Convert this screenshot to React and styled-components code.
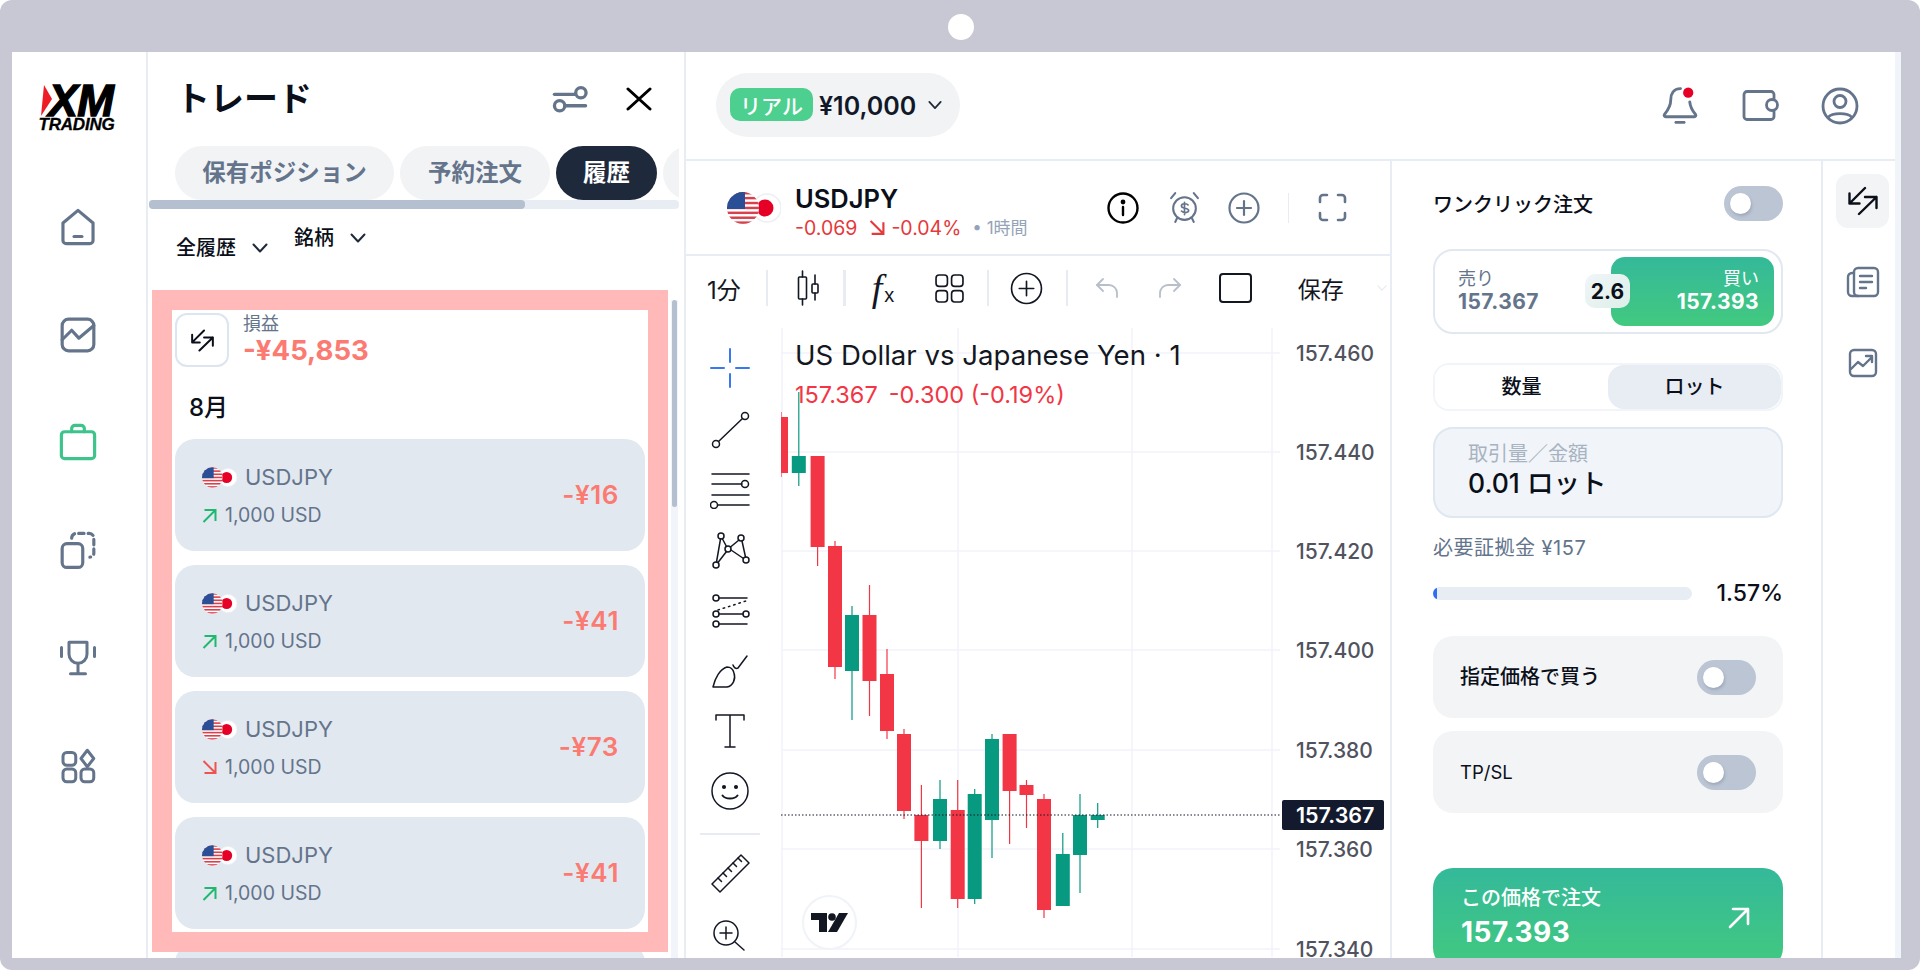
import React, {useId} from 'react';
import styled, {createGlobalStyle} from 'styled-components';

const GlobalStyle = createGlobalStyle`
	html, body {
		margin: 0;
		padding: 0;
		background: #fff;
	}
	* {
		box-sizing: border-box;
	}
	body {
		font-family: Inter, "Noto Sans CJK JP", sans-serif;
		color: #0f172a;
	}
`;

const Frame = styled.div`
	position: relative;
	width: 1920px;
	height: 970px;
	padding: 52px 19px 12px 12px;
	background: #c8c8d4;
	border-radius: 12px;
	overflow: hidden;
`;

const Notch = styled.div`
	position: absolute;
	left: 948px;
	top: 14px;
	width: 26px;
	height: 26px;
	border-radius: 50%;
	background: #fff;
`;

const Screen = styled.div`
	display: flex;
	height: 906px;
	background: #fff;
	overflow: hidden;
`;

/* left nav */
const Sidebar = styled.nav`
	flex: 0 0 136px;
	padding: 33px 2px 0 0;
	border-right: 2px solid #e8edf4;
	display: flex;
	flex-direction: column;
	align-items: center;
`;

const Logo = styled.div`
	width: 82px;
	height: 45px;
	margin-bottom: 43px;
	display: flex;
	flex-direction: column;
	align-items: center;
`;

const LogoTop = styled.div`
	display: flex;
	align-items: center;
	height: 31px;
	margin-left: -2px;
`;

const LogoXM = styled.span`
	font: italic 700 44px/31px "Liberation Sans", sans-serif;
	letter-spacing: -0.5px;
	color: #000;
	-webkit-text-stroke: 1.4px #000;
	margin-left: -4px;
`;

const LogoSub = styled.span`
	margin: 2px 0 0 -3px;
	font: italic 700 17px/13px "Liberation Sans", sans-serif;
	letter-spacing: -0.2px;
	color: #000;
	-webkit-text-stroke: 0.3px #000;
`;

const NavItem = styled.div`
	height: 107.8px;
	display: flex;
	align-items: center;
	justify-content: center;
`;

const Icon = styled.svg`
	display: block;
	flex: none;
	fill: none;
	stroke: ${p => p.$color || '#64748b'};
	stroke-width: ${p => p.$sw || 2};
	stroke-linecap: round;
	stroke-linejoin: round;
`;

/* trade panel */
const Panel = styled.section`
	position: relative;
	flex: 0 0 538px;
	border-right: 2px solid #e8edf4;
	display: flex;
	flex-direction: column;
	overflow: hidden;
`;

const PanelHead = styled.div`
	height: 94px;
	padding: 0 32px 0 28px;
	display: flex;
	align-items: center;
	justify-content: space-between;
`;

const PanelTitle = styled.h1`
	margin: 0;
	font-size: 34px;
	font-weight: 700;
	line-height: 44px;
	color: #0b0f19;
`;

const HeadIcons = styled.div`
	display: flex;
	align-items: center;
	gap: 38px;
`;

const Tabs = styled.div`
	width: 530px;
	margin-left: 1px;
	padding-left: 26px;
	display: flex;
	gap: 6px;
	overflow: hidden;
	flex: none;
`;

const Tab = styled.div`
	flex: none;
	height: 54px;
	width: ${p => p.$w}px;
	padding-bottom: 4px;
	border-radius: 27px;
	background: ${p => (p.$active ? '#1e293b' : '#f1f3f5')};
	color: ${p => (p.$active ? '#fff' : '#64748b')};
	font-size: 23.5px;
	font-weight: 700;
	display: flex;
	align-items: center;
	justify-content: center;
`;

const HScroll = styled.div`
	width: 530px;
	height: 9px;
	margin-left: 1px;
	flex: none;
	background: #e8edf4;
	border-radius: 4px;
`;

const HThumb = styled.div`
	width: 376px;
	height: 9px;
	background: #b4c0d0;
	border-radius: 4px;
`;

const Filters = styled.div`
	height: 91px;
	flex: none;
	padding-left: 28px;
	display: flex;
	align-items: flex-start;
`;

const Filter = styled.div`
	display: flex;
	align-items: center;
	gap: 16px;
	margin-top: ${p => p.$top}px;
	margin-left: ${p => p.$left || 0}px;
	font-size: 20px;
	font-weight: 500;
	line-height: 30px;
	color: #0b0f19;
`;

const ListArea = styled.div`
	flex: 1;
	display: flex;
	min-height: 0;
`;

const ListBody = styled.div`
	flex: 1;
	padding: 13px 26px 0 27px;
	overflow: hidden;
`;

const VScroll = styled.div`
	flex: 0 0 7px;
	margin-right: 6px;
	padding-left: 1px;
	background: #f1f5f9;
`;

const VThumb = styled.div`
	width: 5px;
	height: 207px;
	background: #b4c0d0;
	border-radius: 3px;
`;

const Summary = styled.div`
	display: flex;
	gap: 14px;
`;

const SwapButton = styled.div`
	width: 54px;
	height: 54px;
	border: 2px solid #dce5f0;
	border-radius: 12px;
	display: flex;
	align-items: center;
	justify-content: center;
`;

const SummaryText = styled.div`
	display: flex;
	flex-direction: column;
`;

const SummaryLabel = styled.span`
	font-size: 18px;
	line-height: 21px;
	color: #64748b;
`;

const SummaryValue = styled.span`
	font-size: 27.5px;
	font-weight: 700;
	line-height: 32px;
	color: #fb7a72;
`;

const Month = styled.div`
	margin: 26px 0 16px 14px;
	font-size: 24px;
	font-weight: 500;
	line-height: 30px;
	color: #0b0f19;
`;

const TradeCard = styled.div`
	height: 112px;
	margin-bottom: 14px;
	padding: 25px 26px 0 27px;
	background: #e2e8f0;
	border-radius: 20px;
	display: flex;
	justify-content: space-between;
`;

const TradeInfo = styled.div`
	display: flex;
	flex-direction: column;
	gap: 13px;
`;

const TradeSymbol = styled.div`
	display: flex;
	align-items: center;
	gap: 8px;
	height: 26px;
	font-size: 22px;
	line-height: 26px;
	color: #64748b;
`;

const TradeQty = styled.div`
	display: flex;
	align-items: center;
	gap: 8px;
	height: 24px;
	font-size: 19.5px;
	line-height: 24px;
	color: #64748b;
`;

const TradeAmount = styled.div`
	margin-top: 15px;
	font-size: 26px;
	font-weight: 600;
	line-height: 32px;
	letter-spacing: 0.6px;
	color: #fb7a72;
`;

const Highlight = styled.div`
	position: absolute;
	left: 4px;
	top: 238px;
	width: 516px;
	height: 662px;
	border: 20px solid #ffb9b9;
	pointer-events: none;
`;

/* main area */
const Main = styled.main`
	flex: 1;
	display: flex;
	flex-direction: column;
	border-right: 6px solid #f1f5f9;
	min-width: 0;
`;

const TopBar = styled.header`
	flex: 0 0 109px;
	padding: 0 36px 0 30px;
	border-bottom: 2px solid #e8edf4;
	display: flex;
	align-items: center;
	justify-content: space-between;
`;

const Balance = styled.div`
	width: 244px;
	height: 64px;
	margin-top: -2px;
	padding-left: 14px;
	background: #f1f3f5;
	border-radius: 32px;
	display: flex;
	align-items: center;
`;

const RealBadge = styled.span`
	width: 83px;
	height: 33px;
	background: #4ccf8f;
	border-radius: 10px;
	color: #fff;
	font-size: 21px;
	font-weight: 500;
	display: flex;
	align-items: center;
	justify-content: center;
`;

const BalanceValue = styled.span`
	margin: 2px 12px 0 6px;
	font-size: 25px;
	font-weight: 600;
	color: #111827;
`;

const TopIcons = styled.div`
	display: flex;
	align-items: center;
	gap: 42px;
`;

const BellSlot = styled.div`
	margin-right: 2px;
`;

const Body = styled.div`
	flex: 1;
	display: flex;
	min-height: 0;
`;

const ChartCol = styled.div`
	flex: 0 0 706px;
	border-right: 2px solid #e8edf4;
	display: flex;
	flex-direction: column;
`;

const SymbolRow = styled.div`
	flex: 0 0 95px;
	padding: 0 43px 0 41px;
	border-bottom: 2px solid #e8edf4;
	display: flex;
	align-items: center;
`;

const SymbolText = styled.div`
	margin: 7px 0 0 14px;
	display: flex;
	flex-direction: column;
`;

const SymbolName = styled.div`
	font-size: 25.5px;
	font-weight: 600;
	line-height: 34px;
	color: #0b0f19;
`;

const SymbolChange = styled.div`
	display: flex;
	align-items: center;
	gap: 8px;
	font-size: 19.5px;
	line-height: 24px;
	color: #e5393b;
`;

const ChangeArrow = styled.span`
	margin: 0 -2px 0 4px;
`;

const TimeFrame = styled.span`
	margin-left: 3px;
	font-size: 17px;
	color: #94a3b8;
`;

const SymbolIcons = styled.div`
	margin-left: auto;
	display: flex;
	align-items: center;
`;

const VSep = styled.div`
	flex: none;
	width: ${p => p.$w || 2}px;
	height: ${p => p.$h || 36}px;
	margin-left: ${p => p.$ml || 0}px;
	background: #e8ecf2;
`;

const ChartTools = styled.div`
	flex: 0 0 72px;
	padding: 0 0 8px 21px;
	display: flex;
	align-items: center;
	font-size: 23px;
	color: #131722;
`;

const ToolSlot = styled.div`
	flex: none;
	width: ${p => (p.$w ? `${p.$w}px` : 'auto')};
	margin-left: ${p => p.$ml || 0}px;
	display: flex;
	align-items: center;
`;

const Interval = styled.span`
	font-size: 24px;
`;

const FxLabel = styled.span`
	font: italic 400 38px/36px "Liberation Serif", serif;
`;

const FxSub = styled.span`
	font: 400 20px/18px "Liberation Sans", sans-serif;
	margin: 14px 0 0 2px;
`;

const ChartBody = styled.div`
	flex: 1;
	display: flex;
	min-height: 0;
`;

const ToolRail = styled.div`
	flex: 0 0 95px;
	padding: 10px 0 0 4px;
	display: flex;
	flex-direction: column;
	overflow: hidden;
`;

const RailItem = styled.div`
	flex: none;
	height: 60.4px;
	width: 80px;
	display: flex;
	align-items: center;
	justify-content: center;
`;

const RailDivider = styled.div`
	flex: none;
	width: 60px;
	height: 2px;
	margin: 12px 0 9px 10px;
	background: #e8ecf2;
`;

const Plot = styled.div`
	position: relative;
	flex: 1;
	min-width: 0;
`;

const ChartSvg = styled.svg`
	display: block;
	width: 609px;
	height: 629px;
`;

const Legend = styled.div`
	position: absolute;
	left: 14px;
	top: 9px;
`;

const LegendTitle = styled.div`
	font-size: 27.6px;
	line-height: 36px;
	color: #131722;
`;

const LegendValues = styled.div`
	margin-top: 7px;
	display: flex;
	gap: 11px;
	font-size: 23.5px;
	line-height: 30px;
	color: #f23645;
`;

const TvBadge = styled.div`
	position: absolute;
	left: 21px;
	top: 567px;
	width: 55px;
	height: 55px;
	background: #fff;
	border: 2px solid #f0f3f7;
	border-radius: 50%;
	display: flex;
	align-items: center;
	justify-content: center;
`;

/* order ticket */
const OrderCol = styled.aside`
	flex: 0 0 431px;
	padding: 26px 38px 0 41px;
	border-right: 2px solid #e8edf4;
	overflow: hidden;
`;

const OneClick = styled.div`
	height: 35px;
	padding-bottom: 2px;
	display: flex;
	align-items: center;
	justify-content: space-between;
	font-size: 20px;
	font-weight: 500;
	color: #0b0f19;
`;

const Toggle = styled.div`
	flex: none;
	width: 59px;
	height: 35px;
	padding: 7px 0 0 6px;
	border-radius: 18px;
	background: #bcc5d3;
`;

const Knob = styled.div`
	width: 21px;
	height: 21px;
	border-radius: 50%;
	background: #fff;
	box-shadow: 1px 2px 3px rgba(100, 116, 139, 0.35);
`;

const PriceBox = styled.div`
	position: relative;
	height: 85px;
	margin-top: 27px;
	padding: 6px 7px 6px 6px;
	border: 2px solid #e2e8f0;
	border-radius: 20px;
	display: flex;
	justify-content: space-between;
`;

const SellSide = styled.div`
	padding: 12px 0 0 17px;
	color: #64748b;
`;

const BuySide = styled.div`
	width: 163px;
	padding: 12px 15px 0 0;
	color: #fff;
	text-align: right;
	background: linear-gradient(180deg, #34b99a, #42c97f);
	border-radius: 14px;
`;

const SideLabel = styled.div`
	font-size: 18px;
	line-height: 20px;
`;

const SidePrice = styled.div`
	font-size: 21px;
	font-weight: 700;
	line-height: 26px;
	letter-spacing: 0.4px;
`;

const SpreadBadge = styled.div`
	position: absolute;
	left: 150px;
	top: 23px;
	width: 45px;
	height: 34px;
	border-radius: 10px;
	background: linear-gradient(135deg, #f1f5f9, #dcefe8);
	font-size: 21px;
	font-weight: 700;
	color: #0b0f19;
	display: flex;
	align-items: center;
	justify-content: center;
`;

const Segment = styled.div`
	height: 48px;
	margin-top: 29px;
	border: 2px solid #f1f5f9;
	border-radius: 16px;
	display: flex;
	overflow: hidden;
`;

const SegmentItem = styled.div`
	flex: 1;
	padding-bottom: 3px;
	background: ${p => (p.$active ? '#e8edf4' : '#fff')};
	border-radius: ${p => (p.$active ? '16px' : 0)};
	font-size: 20px;
	font-weight: 500;
	color: #0b0f19;
	display: flex;
	align-items: center;
	justify-content: center;
`;

const VolumeInput = styled.div`
	height: 91px;
	margin-top: 16px;
	padding: 11px 33px 0;
	background: #f1f5f9;
	border: 2px solid #dfe7f1;
	border-radius: 20px;
`;

const VolumeLabel = styled.div`
	font-size: 20px;
	line-height: 28px;
	color: #a8b3c2;
`;

const VolumeValue = styled.div`
	font-size: 26.5px;
	font-weight: 500;
	line-height: 31px;
	color: #0b0f19;
`;

const MarginText = styled.div`
	height: 24px;
	margin-top: 18px;
	font-size: 20px;
	line-height: 24px;
	letter-spacing: 0.5px;
	color: #64748b;
`;

const UsageRow = styled.div`
	height: 24px;
	margin-top: 21px;
	display: flex;
	align-items: center;
	justify-content: space-between;
	font-size: 23px;
	font-weight: 500;
	color: #0b0f19;
`;

const UsageTrack = styled.div`
	width: 259px;
	height: 13px;
	background: #e8edf4;
	border-radius: 7px;
	overflow: hidden;
`;

const UsageFill = styled.div`
	height: 100%;
	background: #2f6df6;
	border-radius: 7px;
`;

const OptionRow = styled.div`
	height: 82px;
	margin-top: ${p => p.$mt}px;
	padding: 0 27px;
	background: #f2f4f6;
	border-radius: 20px;
	display: flex;
	align-items: center;
	justify-content: space-between;
	font-size: 20px;
	font-weight: 500;
	color: #0b0f19;
`;

const OptionText = styled.span`
	margin-bottom: 3px;
`;

const OptionShort = styled.span`
	font-size: 18.5px;
	font-weight: 400;
`;

const OrderButton = styled.div`
	height: 100px;
	margin-top: 55px;
	padding: 16px 33px 16px 28px;
	background: linear-gradient(180deg, #34b99a, #42c97f);
	border-radius: 20px;
	color: #fff;
	display: flex;
	justify-content: space-between;
`;

const OrderLabel = styled.div`
	font-size: 20px;
	line-height: 28px;
	font-weight: 500;
`;

const OrderPrice = styled.div`
	margin-top: 3px;
	font-size: 28px;
	font-weight: 700;
	line-height: 34px;
	letter-spacing: 0.5px;
`;

const RightRail = styled.aside`
	flex: 1;
	padding: 13px 0 0 13px;
	display: flex;
	flex-direction: column;
	gap: 27px;
`;

const RailButton = styled.div`
	width: 53px;
	height: 54px;
	border-radius: 12px;
	background: ${p => (p.$active ? '#f2f4f6' : 'transparent')};
	display: flex;
	align-items: center;
	justify-content: center;
`;

/* flags */
function PairFlag({w = 35, h = 21}) {
	const id = useId();
	return (
		<svg width={w} height={h} viewBox="0 0 54 32" style={{display: 'block', flex: 'none'}}>
			<circle cx="40" cy="16" r="14" fill="#fff" stroke="#eceff3" strokeWidth="1.5"/>
			<circle cx="38" cy="16" r="8.5" fill="#e60026"/>
			<clipPath id={id}>
				<circle cx="16" cy="16" r="16"/>
			</clipPath>
			<g clipPath={`url(#${id})`}>
				<rect width="32" height="32" fill="#fff"/>
				{[0, 1, 2, 3, 4, 5, 6].map(i => (
					<rect key={i} y={i * 4.9} width="32" height="2.45" fill="#d8414c"/>
				))}
				<rect width="18" height="17" fill="#2a4f96"/>
			</g>
		</svg>
	);
}

/* nav icons */
const HomeIcon = () => (
	<Icon width="38" height="38" viewBox="0 0 24 24">
		<path d="M2.5 9.500 12 1.500l9.500 8V20.500a2 2 0 0 1-2 2h-15a2 2 0 0 1-2-2z"/>
		<path d="M9.500 18h5"/>
	</Icon>
);
const ChartNavIcon = () => (
	<Icon width="38" height="38" viewBox="0 0 24 24">
		<rect x="2" y="2" width="20" height="20" rx="4"/>
		<path d="M2 15l6-6 4.500 5L22 6"/>
	</Icon>
);
const BagIcon = () => (
	<Icon $color="#3cc48a" width="40" height="38" viewBox="0 0 25 24">
		<rect x="2" y="5.500" width="21" height="17" rx="2"/>
		<path d="M8.500 5.500V3.500a2 2 0 0 1 2-2h4a2 2 0 0 1 2 2v2"/>
	</Icon>
);
const CopyIcon = () => (
	<Icon width="38" height="38" viewBox="0 0 24 24">
		<rect x="2" y="8" width="13" height="15" rx="3"/>
		<path d="M8 4.500A3 3 0 0 1 11 1.500h8a3 3 0 0 1 3 3V14a2.500 2.500 0 0 1-2.500 2.500" strokeDasharray="3.400 2.600"/>
	</Icon>
);
const TrophyIcon = () => (
	<Icon width="38" height="36" viewBox="0 0 25 24">
		<path d="M6.500 1.500h12v8a6 6 0 0 1-12 0z"/>
		<path d="M12.500 15.500v6.500M7.500 22.500h10M1.500 5v6M23.500 5v6"/>
	</Icon>
);
const AppsIcon = () => (
	<Icon width="36" height="36" viewBox="0 0 24 24">
		<rect x="2" y="3" width="8.500" height="8.500" rx="2.500"/>
		<rect x="2" y="14" width="8.500" height="8.500" rx="2.500"/>
		<rect x="14" y="14" width="8.500" height="8.500" rx="2.500"/>
		<path d="M18.200 1.500 22.500 7l-4.300 5.500L14 7z"/>
	</Icon>
);

const FilterIcon = () => (
	<Icon $sw="3.200" width="36" height="28" viewBox="0 0 34 27">
		<path d="M2 9h20"/>
		<circle cx="27.500" cy="7.500" r="5"/>
		<circle cx="7" cy="20" r="5"/>
		<path d="M12 20h20"/>
	</Icon>
);
const CloseIcon = () => (
	<Icon $color="#000" $sw="3" width="26" height="24" viewBox="0 0 26 24">
		<path d="M2 2l22 20M24 2 2 22"/>
	</Icon>
);
const Chevron = ({size = 16, color = '#1e293b'}) => (
	<Icon $color={color} $sw="2" width={size} height={size} viewBox="0 0 16 16">
		<path d="M1.500 4.500 8 11.500l6.500-7"/>
	</Icon>
);
const SwapIcon = ({size = 30, sw = 2.400}) => (
	<Icon $color="#0b0f19" $sw={sw} width={size} height={size} viewBox="0 0 30 28">
		<path d="M17 1 1.500 16.500M1.500 6.500v10h10"/>
		<path d="M11 27 28.500 10M17 10h11.500v11"/>
	</Icon>
);
const UpArrow = ({color = '#1fb86f', size = 15}) => (
	<Icon $color={color} $sw="2" width={size} height={size} viewBox="0 0 15 15" style={{strokeLinecap: 'butt', strokeLinejoin: 'miter'}}>
		<path d="M1.500 14 13 2.500M2.500 2h11v11"/>
	</Icon>
);
const DownArrow = ({color = '#ef5350', size = 15}) => (
	<Icon $color={color} $sw="2" width={size} height={size} viewBox="0 0 15 15" style={{strokeLinecap: 'butt', strokeLinejoin: 'miter'}}>
		<path d="M1.500 1 13 12.500M13.500 2v11h-11"/>
	</Icon>
);

/* header icons */
const BellIcon = () => (
	<Icon $sw="2.800" width="36" height="39" viewBox="0 0 35 38">
		<path d="M18 2.500C11 2.500 8.500 8 8.500 13.500 8.500 20 5.500 24 2.500 27.500c-1 1.200-.3 2.500 1.200 2.500h27.600c1.500 0 2.200-1.300 1.200-2.500-3-3.500-5-7-5.500-12"/>
		<path d="M13.500 35.500h8"/>
		<circle cx="25.500" cy="6.500" r="5" fill="#e60026" stroke="none"/>
	</Icon>
);
const WalletIcon = () => (
	<Icon $sw="2.800" width="37" height="33" viewBox="0 0 37 32">
		<path d="M32 9V5a3 3 0 0 0-3-3H5A3 3 0 0 0 2 5v22a3 3 0 0 0 3 3h24a3 3 0 0 0 3-3v-5"/>
		<rect x="24.500" y="10" width="11" height="11" rx="5.500"/>
	</Icon>
);
const UserIcon = () => (
	<Icon $sw="2.800" width="38" height="38" viewBox="0 0 38 38">
		<circle cx="19" cy="19" r="17"/>
		<circle cx="19" cy="14.500" r="6"/>
		<path d="M7.500 30C11 25.500 27 25.500 30.500 30"/>
	</Icon>
);

/* symbol row icons */
const InfoIcon = () => (
	<Icon $color="#000" $sw="2.400" width="32" height="32" viewBox="0 0 32 32">
		<circle cx="16" cy="16" r="14.500"/>
		<path d="M16 15v8"/>
		<circle cx="16" cy="10" r="1.200" fill="#000"/>
	</Icon>
);
const AlarmIcon = () => (
	<Icon $sw="2" width="33" height="33" viewBox="0 0 32 32">
		<circle cx="16" cy="17" r="11"/>
		<path d="M3 7l4-5M29 7l-4-5M7 30l2-4M25 30l-2-4"/>
		<path d="M19.500 13.500c-1-1.500-6.500-1.800-6.500 1 0 3 7 1.500 7 4.500 0 2.500-5.500 2.500-7 .5M16 11v12" strokeWidth="1.600"/>
	</Icon>
);
const PlusCircle = ({size = 32, color = '#64748b', sw = 2.200}) => (
	<Icon $color={color} $sw={sw} width={size} height={size} viewBox="0 0 32 32">
		<circle cx="16" cy="16" r="14.500"/>
		<path d="M16 9v14M9 16h14"/>
	</Icon>
);
const FullscreenIcon = () => (
	<Icon $sw="2.600" width="29" height="29" viewBox="0 0 29 29">
		<path d="M2 9V5a3 3 0 0 1 3-3h4M20 2h4a3 3 0 0 1 3 3v4M27 20v4a3 3 0 0 1-3 3h-4M9 27H5a3 3 0 0 1-3-3v-4"/>
	</Icon>
);

/* chart toolbar icons */
const CandleIcon = () => (
	<Icon $color="#131722" $sw="1.600" width="24" height="36" viewBox="0 0 24 36">
		<path d="M5.500 1v6M5.500 29v6M18 5v9M18 23v7"/>
		<rect x="1.500" y="7" width="8" height="22" rx="1"/>
		<rect x="15" y="14" width="6" height="9" rx="1"/>
	</Icon>
);
const GridIcon = () => (
	<Icon $color="#131722" $sw="1.600" width="29" height="29" viewBox="0 0 28 28">
		<rect x="1" y="1" width="11" height="11" rx="3"/>
		<rect x="16" y="1" width="11" height="11" rx="3"/>
		<rect x="1" y="16" width="11" height="11" rx="3"/>
		<rect x="16" y="16" width="11" height="11" rx="3"/>
	</Icon>
);
const UndoIcon = ({flip}) => (
	<Icon $color="#b8bfca" $sw="1.800" width="24" height="22" viewBox="0 0 24 22" style={flip ? {transform: 'scaleX(-1)'} : undefined}>
		<path d="M8 2 2 8l6 6"/>
		<path d="M2 8h12a8 8 0 0 1 8 8v4"/>
	</Icon>
);
const SquareIcon = () => (
	<Icon $color="#131722" $sw="2" width="33" height="30" viewBox="0 0 33 30">
		<rect x="1" y="1" width="31" height="28" rx="3"/>
	</Icon>
);

/* drawing rail icons */
const RailIcon = ({children, color = '#131722'}) => (
	<Icon $color={color} $sw="1.500" width="40" height="40" viewBox="0 0 40 40">
		{children}
	</Icon>
);
const dot = (cx, cy, r = 3.500) => <circle cx={cx} cy={cy} r={r}/>;

const railTools = [
	<RailIcon color="#3b78f0" key="cross"><path d="M20 1v13M20 26v13M1 20h13M26 20h13" strokeWidth="2"/></RailIcon>,
	<RailIcon key="line">{dot(6, 35)}{dot(35, 7)}<path d="M8.500 32.500 32.500 9.500"/></RailIcon>,
	<RailIcon key="fib">
		<path d="M2 5h37M2 15h30M2 26h37M8 36h31"/>{dot(35, 15)}{dot(4, 36)}
	</RailIcon>,
	<RailIcon key="pattern">
		{dot(11, 7, 3)}{dot(31, 9, 3)}{dot(6, 36, 3)}{dot(36, 31, 3)}{dot(18, 20, 3)}
		<path d="M10.500 10 6.500 33M12.500 10l4 7.500M20.500 18l8.500-7M32 12l3.500 16M21 21l12.500 8.500M8 33.500l8.500-11"/>
	</RailIcon>,
	<RailIcon key="forecast">
		{dot(6, 8, 3)}{dot(6, 24, 3)}{dot(36, 24, 3)}{dot(6, 34, 3)}
		<path d="M9 8h28M9 24h24M9 34h28"/>
		<path d="M8 20 36 11" strokeDasharray="1.500 4"/>
	</RailIcon>,
	<RailIcon key="brush">
		<path d="M3 37h14c6-1 9-8 7-14-1-4-4-6-7-6C10 19 5 28 3 37z"/>
		<path d="M23 15c1 3 3 4 5 3l9-12"/>
	</RailIcon>,
	<RailIcon key="text"><path d="M6 9V4h28v5M20 4v32M15 36h10"/></RailIcon>,
	<RailIcon key="smile">
		<circle cx="20" cy="20" r="18"/>
		<circle cx="14" cy="16" r="1.300" fill="#131722"/>
		<circle cx="26" cy="16" r="1.300" fill="#131722"/>
		<path d="M12.500 24.500c3 4 12 4 15 0" strokeWidth="2"/>
	</RailIcon>
];

const RulerIcon = () => (
	<RailIcon>
		<path d="M2 30 31 1l8 8-29 29z"/>
		<path d="M8 24l3.500 3.500M13 19l3.500 3.500M18 14l3.500 3.500M23 9l3.500 3.500M28 4l3.500 3.500"/>
	</RailIcon>
);
const ZoomIcon = () => (
	<RailIcon>
		<circle cx="16" cy="18" r="12"/>
		<path d="M16 12v12M10 18h12M25 27l9 8"/>
	</RailIcon>
);

const TvLogo = () => (
	<svg width="37" height="21" viewBox="0 0 37 21" style={{display: 'block'}}>
		<path d="M0 1h16v19H8V8H0z" fill="#131722"/>
		<circle cx="21" cy="5" r="3.800" fill="#131722"/>
		<path d="M28 1h9L26 20h-9z" fill="#131722"/>
	</svg>
);

const NotesIcon = () => (
	<Icon $sw="2.400" width="34" height="32" viewBox="0 0 34 32">
		<rect x="8" y="2" width="24" height="28" rx="4"/>
		<path d="M8 7H6a4 4 0 0 0-4 4v15a4 4 0 0 0 4 4h6"/>
		<path d="M14 10h12M14 16h12M14 22h6"/>
	</Icon>
);
const TrendIcon = () => (
	<Icon $sw="2.400" width="30" height="30" viewBox="0 0 30 30">
		<rect x="2" y="2" width="26" height="26" rx="4"/>
		<path d="M3 21l7-7 5 4 9-9M18 8h6v6"/>
	</Icon>
);

/* candles: x, up, bodyTop, bodyBottom, wickTop, wickBottom */
const candles = [
	[781, false, 417, 473, 412, 477],
	[798.8, true, 456, 473, 392, 486],
	[817.6, false, 456, 547, 456, 566],
	[835, false, 546, 667, 541, 679],
	[852, true, 615, 671, 606, 720],
	[869.5, false, 615, 681, 585, 716],
	[887, false, 674, 731, 649, 739],
	[904, false, 734, 811, 729, 819],
	[921.4, false, 815, 841, 785, 908],
	[940, true, 799, 841, 780, 849],
	[957.7, false, 810, 899, 780, 908],
	[974.7, true, 794, 899, 789, 904],
	[992, true, 739, 820, 734, 858],
	[1009.6, false, 734, 791, 734, 844],
	[1026.5, false, 785, 795, 780, 828],
	[1044, false, 799, 910, 794, 918],
	[1062.8, true, 854, 906, 833, 906],
	[1080, true, 815, 855, 794, 893],
	[1097.7, true, 815, 820, 803, 828]
];

const priceLevels = [
	[353, '157.460'],
	[452, '157.440'],
	[551, '157.420'],
	[650, '157.400'],
	[750, '157.380'],
	[849, '157.360'],
	[949, '157.340']
];

const PriceChart = () => (
	<ChartSvg viewBox="781 328 609 629">
		<g stroke="#f0f3fa" strokeWidth="1.5">
			{[782, 958, 1132, 1272].map(x => <line key={x} x1={x} x2={x} y1="328" y2="957"/>)}
			{priceLevels.map(([y]) => <line key={y} x1="781" x2="1280" y1={y} y2={y}/>)}
		</g>
		{candles.map(([x, up, top, bottom, wickTop, wickBottom]) => {
			const color = up ? '#089981' : '#f23645';
			return (
				<g key={x} fill={color} stroke={color}>
					<line x1={x} x2={x} y1={wickTop} y2={wickBottom} strokeWidth="1.2"/>
					<rect x={x - 7} y={top} width="14" height={bottom - top} stroke="none"/>
				</g>
			);
		})}
		<line x1="781" x2="1280" y1="815" y2="815" stroke="#131722" strokeWidth="1.2" strokeDasharray="1.5 2"/>
		{priceLevels.map(([y, label]) => (
			<text key={label} x="1296" y={y + 8} fontSize="21" fill="#50535e" fontWeight="500" fontFamily="Inter, sans-serif">{label}</text>
		))}
		<rect x="1282" y="800" width="102" height="30" rx="2" fill="#131a2e"/>
		<text x="1296" y="823" fontSize="21.5" fill="#fff" fontWeight="600" fontFamily="Inter, sans-serif">157.367</text>
	</ChartSvg>
);

const trades = [
	{up: true, amount: '-¥16'},
	{up: true, amount: '-¥41'},
	{up: false, amount: '-¥73'},
	{up: true, amount: '-¥41'}
];

const navIcons = [HomeIcon, ChartNavIcon, BagIcon, CopyIcon, TrophyIcon, AppsIcon];

const Switch = () => (
	<Toggle>
		<Knob/>
	</Toggle>
);

export default function App() {
	return (
		<Frame>
			<GlobalStyle/>
			<Notch/>
			<Screen>
				<Sidebar>
					<Logo>
						<LogoTop>
							<svg width="12" height="31" viewBox="0 0 12 31" style={{display: 'block'}}>
								<path d="M3 0l8 14L0 31z" fill="#ee1c25"/>
							</svg>
							<LogoXM>XM</LogoXM>
						</LogoTop>
						<LogoSub>TRADING</LogoSub>
					</Logo>
					{navIcons.map((NavIcon, i) => (
						<NavItem key={i}>
							<NavIcon/>
						</NavItem>
					))}
				</Sidebar>

				<Panel>
					<PanelHead>
						<PanelTitle>トレード</PanelTitle>
						<HeadIcons>
							<FilterIcon/>
							<CloseIcon/>
						</HeadIcons>
					</PanelHead>
					<Tabs>
						<Tab $w={219}>保有ポジション</Tab>
						<Tab $w={150}>予約注文</Tab>
						<Tab $w={101} $active>履歴</Tab>
						<Tab $w={100}/>
					</Tabs>
					<HScroll>
						<HThumb/>
					</HScroll>
					<Filters>
						<Filter $top={24}>全履歴 <Chevron/></Filter>
						<Filter $top={14} $left={26}>銘柄 <Chevron/></Filter>
					</Filters>
					<ListArea>
						<ListBody>
							<Summary>
								<SwapButton>
									<SwapIcon size={23} sw={2.6}/>
								</SwapButton>
								<SummaryText>
									<SummaryLabel>損益</SummaryLabel>
									<SummaryValue>-¥45,853</SummaryValue>
								</SummaryText>
							</Summary>
							<Month>8月</Month>
							{trades.map((trade, i) => (
								<TradeCard key={i}>
									<TradeInfo>
										<TradeSymbol><PairFlag/>USDJPY</TradeSymbol>
										<TradeQty>
											{trade.up ? <UpArrow/> : <DownArrow/>}
											1,000 USD
										</TradeQty>
									</TradeInfo>
									<TradeAmount>{trade.amount}</TradeAmount>
								</TradeCard>
							))}
							<TradeCard/>
						</ListBody>
						<VScroll>
							<VThumb/>
						</VScroll>
					</ListArea>
					<Highlight/>
				</Panel>

				<Main>
					<TopBar>
						<Balance>
							<RealBadge>リアル</RealBadge>
							<BalanceValue>¥10,000</BalanceValue>
							<Chevron size={14}/>
						</Balance>
						<TopIcons>
							<BellSlot><BellIcon/></BellSlot>
							<WalletIcon/>
							<UserIcon/>
						</TopIcons>
					</TopBar>
					<Body>
						<ChartCol>
							<SymbolRow>
								<PairFlag w={54} h={32}/>
								<SymbolText>
									<SymbolName>USDJPY</SymbolName>
									<SymbolChange>
										-0.069
										<ChangeArrow><DownArrow color="#e5393b" size={16}/></ChangeArrow>
										-0.04%
										<TimeFrame>• 1時間</TimeFrame>
									</SymbolChange>
								</SymbolText>
								<SymbolIcons>
									<InfoIcon/>
									<ToolSlot $ml={29}><AlarmIcon/></ToolSlot>
									<ToolSlot $ml={27}><PlusCircle/></ToolSlot>
									<VSep $ml={28} $h={30} $w={1}/>
									<ToolSlot $ml={29}><FullscreenIcon/></ToolSlot>
								</SymbolIcons>
							</SymbolRow>
							<ChartTools>
								<Interval>1分</Interval>
								<VSep $ml={25}/>
								<ToolSlot $ml={29}><CandleIcon/></ToolSlot>
								<VSep $ml={22} $w={3}/>
								<ToolSlot $ml={26} $w={26}><FxLabel>f</FxLabel><FxSub>x</FxSub></ToolSlot>
								<ToolSlot $ml={37}><GridIcon/></ToolSlot>
								<VSep $ml={23}/>
								<ToolSlot $ml={21}><PlusCircle size={33} color="#131722" sw={1.6}/></ToolSlot>
								<VSep $ml={23}/>
								<ToolSlot $ml={27}><UndoIcon/></ToolSlot>
								<ToolSlot $ml={39}><UndoIcon flip/></ToolSlot>
								<ToolSlot $ml={37}><SquareIcon/></ToolSlot>
								<ToolSlot $ml={46}>保存</ToolSlot>
								<ToolSlot $ml={33}><Chevron size={10} color="#e8ecf2"/></ToolSlot>
							</ChartTools>
							<ChartBody>
								<ToolRail>
									{railTools.map(tool => <RailItem key={tool.key}>{tool}</RailItem>)}
									<RailDivider/>
									<RailItem><RulerIcon/></RailItem>
									<RailItem><ZoomIcon/></RailItem>
								</ToolRail>
								<Plot>
									<PriceChart/>
									<Legend>
										<LegendTitle>US Dollar vs Japanese Yen · 1</LegendTitle>
										<LegendValues>
											<span>157.367</span>
											<span>-0.300 (-0.19%)</span>
										</LegendValues>
									</Legend>
									<TvBadge>
										<TvLogo/>
									</TvBadge>
								</Plot>
							</ChartBody>
						</ChartCol>

						<OrderCol>
							<OneClick>
								ワンクリック注文
								<Switch/>
							</OneClick>
							<PriceBox>
								<SellSide>
									<SideLabel>売り</SideLabel>
									<SidePrice>157.367</SidePrice>
								</SellSide>
								<BuySide>
									<SideLabel>買い</SideLabel>
									<SidePrice>157.393</SidePrice>
								</BuySide>
								<SpreadBadge>2.6</SpreadBadge>
							</PriceBox>
							<Segment>
								<SegmentItem>数量</SegmentItem>
								<SegmentItem $active>ロット</SegmentItem>
							</Segment>
							<VolumeInput>
								<VolumeLabel>取引量／金額</VolumeLabel>
								<VolumeValue>0.01 ロット</VolumeValue>
							</VolumeInput>
							<MarginText>必要証拠金 ¥157</MarginText>
							<UsageRow>
								<UsageTrack>
									<UsageFill style={{width: '1.57%'}}/>
								</UsageTrack>
								<span>1.57%</span>
							</UsageRow>
							<OptionRow $mt={31}>
								<OptionText>指定価格で買う</OptionText>
								<Switch/>
							</OptionRow>
							<OptionRow $mt={13}>
								<OptionShort>TP/SL</OptionShort>
								<Switch/>
							</OptionRow>
							<OrderButton>
								<div>
									<OrderLabel>この価格で注文</OrderLabel>
									<OrderPrice>157.393</OrderPrice>
								</div>
								<ToolSlot>
									<Icon $color="#fff" $sw="2.6" width="22" height="22" viewBox="0 0 22 22">
										<path d="M2 20 20 2M5 2h15v15"/>
									</Icon>
								</ToolSlot>
							</OrderButton>
						</OrderCol>

						<RightRail>
							<RailButton $active><SwapIcon/></RailButton>
							<RailButton><NotesIcon/></RailButton>
							<RailButton><TrendIcon/></RailButton>
						</RightRail>
					</Body>
				</Main>
			</Screen>
		</Frame>
	);
}
